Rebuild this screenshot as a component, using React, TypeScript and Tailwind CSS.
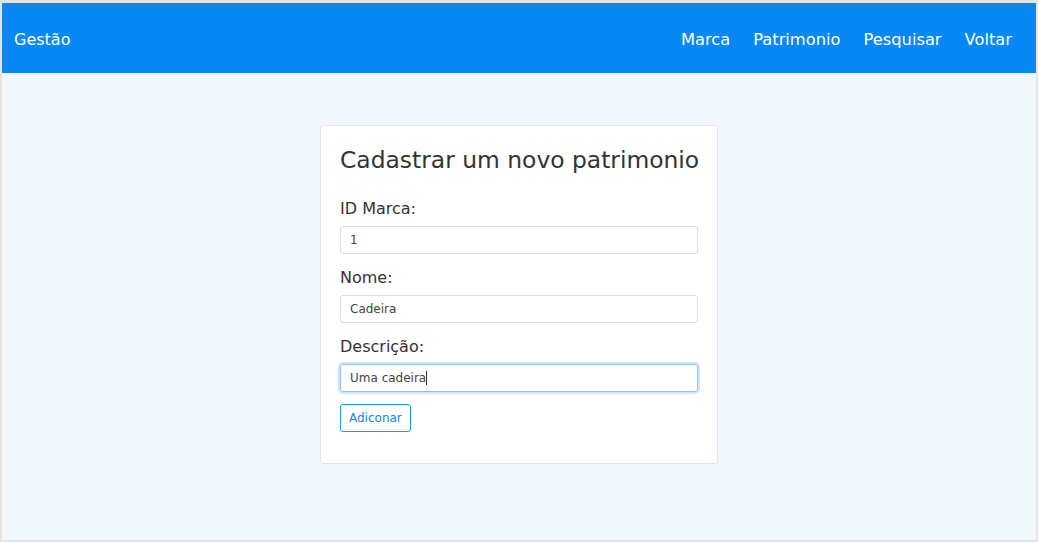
import React from "react";

export default function App() {
  const font = { fontFamily: '"DejaVu Sans", Verdana, sans-serif' };
  return (
    <div
      className="h-[542px] w-[1038px] border-t-[3px] border-l-2 border-r-2 border-b-2 border-[#e6e4e1] bg-[#f2f7fe] flex flex-col"
      style={font}
    >
      <header className="h-[70px] shrink-0 bg-[#0788f5] flex items-center justify-between pl-3 pt-[4px] text-white">
        <span className="text-[16px]">Gestão</span>
        <nav className="flex gap-[23px] pr-[24px] text-[16.3px]">
          <a>Marca</a>
          <a>Patrimonio</a>
          <a>Pesquisar</a>
          <a>Voltar</a>
        </nav>
      </header>
      <main className="flex justify-center pt-[52px]">
        <div className="w-[398px] bg-white border border-[#e2e5e9] rounded-[3px] px-[19px] pt-[18px] pb-[31px] text-[#333]">
          <h1 className="text-[23.4px] leading-[32px] mb-[22px] whitespace-nowrap">Cadastrar um novo patrimonio</h1>
          {[
            { label: "ID Marca:", value: "1" },
            { label: "Nome:", value: "Cadeira" },
          ].map((f) => (
            <div key={f.label} className="mb-[13px]">
              <label className="block text-[16px] leading-[22px] mb-[6px]">{f.label}</label>
              <div className="h-[28px] border border-[#dcdfe4] rounded-[3px] flex items-center px-[9px] text-[12px] text-[#444]">
                {f.value}
              </div>
            </div>
          ))}
          <div className="mb-[12px]">
            <label className="block text-[16px] leading-[22px] mb-[6px]">Descrição:</label>
            <div className="h-[28px] border border-[#8dc3f7] rounded-[3px] shadow-[0_0_0_2px_#cfe6fc] flex items-center px-[9px] text-[12px] text-[#444]">
              Uma cadeira<span className="inline-block w-px h-[14px] bg-[#333]" />
            </div>
          </div>
          <button className="h-[28px] px-[8px] border border-[#2d94f5] rounded-[3px] text-[#1182f0] text-[12px] bg-white">
            Adiconar
          </button>
        </div>
      </main>
    </div>
  );
}
